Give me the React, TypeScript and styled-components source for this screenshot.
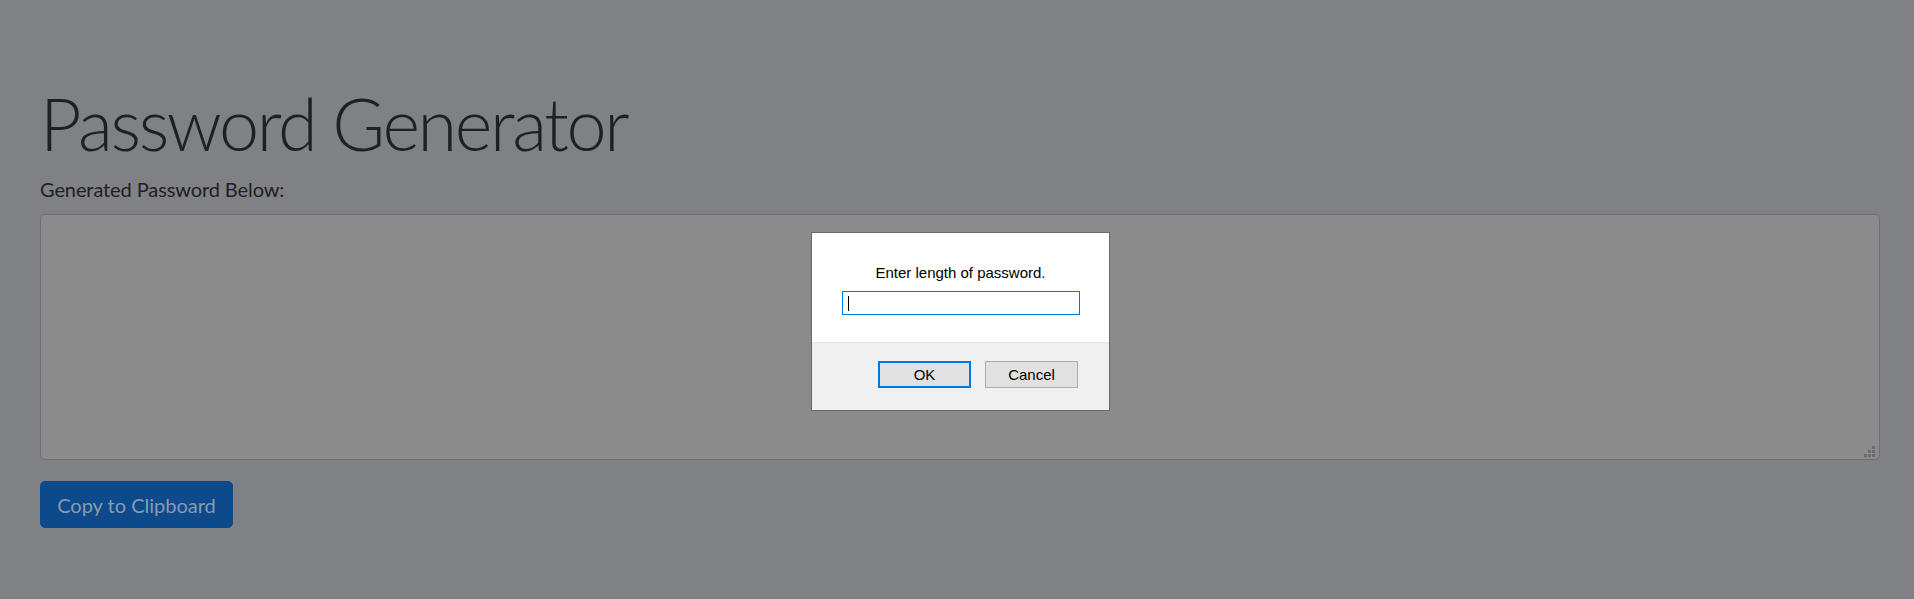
import React from "react";
import styled, { createGlobalStyle } from "styled-components";

const Global = createGlobalStyle`
  html, body { margin: 0; padding: 0; background: #808184; }
  body { font-family: "Lato", "Open Sans", sans-serif; color: #1f2023; }
  * { box-sizing: border-box; }
`;

const Page = styled.main`
  display: flex;
  flex-direction: column;
  align-items: flex-start;
  padding: 80px 34px 0 40px;
  min-height: 599px;
`;

const Title = styled.h1`
  margin: 0;
  font-family: "Lato", sans-serif;
  font-weight: 300;
  font-size: 72px;
  line-height: 86px;
  letter-spacing: -2.4px;
  color: #1f2023;
`;

const Label = styled.label`
  margin-top: 8px;
  font-family: "Lato", sans-serif;
  font-size: 20px;
  line-height: 30px;
  letter-spacing: -0.1px;
  color: #1f2023;
`;

const FieldWrap = styled.div`
  position: relative;
  align-self: stretch;
  margin-top: 10px;
`;

const Output = styled.textarea`
  display: block;
  width: 100%;
  height: 246px;
  margin: 0;
  background: #8b8b8b;
  border: 1px solid #6f7073;
  border-radius: 5px;
  resize: none;
  outline: none;
`;

const Grip = styled.svg`
  position: absolute;
  right: 4px;
  bottom: 2px;
  width: 12px;
  height: 12px;
`;

const CopyButton = styled.button`
  margin-top: 21px;
  height: 47px;
  padding: 0 16px;
  background: #0d4a8b;
  color: #8a9aae;
  border: 1px solid #0d4a8b;
  border-radius: 5px;
  font-family: "Lato", sans-serif;
  font-size: 20px;
  line-height: 30px;
  width: 193px;
`;

const Dialog = styled.div`
  position: fixed;
  left: 811px;
  top: 232px;
  width: 299px;
  height: 179px;
  display: flex;
  flex-direction: column;
  border: 1px solid #6a6a6a;
  background: #ffffff;
  font-family: "Liberation Sans", Arial, sans-serif;
`;

const DialogBody = styled.div`
  display: flex;
  flex-direction: column;
  align-items: center;
  padding-top: 31px;
  height: 109px;
`;

const Prompt = styled.div`
  font-size: 15px;
  line-height: 17px;
  color: #000;
`;

const PromptInput = styled.div`
  margin-top: 10px;
  width: 238px;
  height: 24px;
  border: 1px solid #0078d7;
  display: flex;
  align-items: center;
  padding-left: 5px;
`;

const Caret = styled.span`
  display: block;
  width: 1px;
  height: 15px;
  background: #000;
`;

const DialogFooter = styled.div`
  flex: 1;
  background: #f0f0f0;
  border-top: 1px solid #e2e2e2;
  display: flex;
  justify-content: flex-end;
  align-items: flex-start;
  gap: 14px;
  padding: 18px 31px 0 0;
`;

const DialogButton = styled.button<{ $primary?: boolean }>`
  width: 93px;
  height: 27px;
  margin: 0;
  padding: 0;
  background: #e1e1e1;
  border: ${(p) => (p.$primary ? "2px solid #0078d7" : "1px solid #adadad")};
  font-family: "Liberation Sans", Arial, sans-serif;
  font-size: 15px;
  color: #000;
`;

export default function App() {
  return (
    <>
      <Global />
      <Page>
        <Title>Password Generator</Title>
        <Label htmlFor="password">Generated Password Below:</Label>
        <FieldWrap>
          <Output id="password" readOnly />
          <Grip viewBox="0 0 12 12">
            <g fill="#6c6c6c">
              <rect x="8" y="0" width="3" height="3" />
              <rect x="4" y="4" width="3" height="3" />
              <rect x="8" y="4" width="3" height="3" />
              <rect x="0" y="8" width="3" height="3" />
              <rect x="4" y="8" width="3" height="3" />
              <rect x="8" y="8" width="3" height="3" />
            </g>
          </Grip>
        </FieldWrap>
        <CopyButton>Copy to Clipboard</CopyButton>
      </Page>
      <Dialog>
        <DialogBody>
          <Prompt>Enter length of password.</Prompt>
          <PromptInput>
            <Caret />
          </PromptInput>
        </DialogBody>
        <DialogFooter>
          <DialogButton $primary>OK</DialogButton>
          <DialogButton>Cancel</DialogButton>
        </DialogFooter>
      </Dialog>
    </>
  );
}
